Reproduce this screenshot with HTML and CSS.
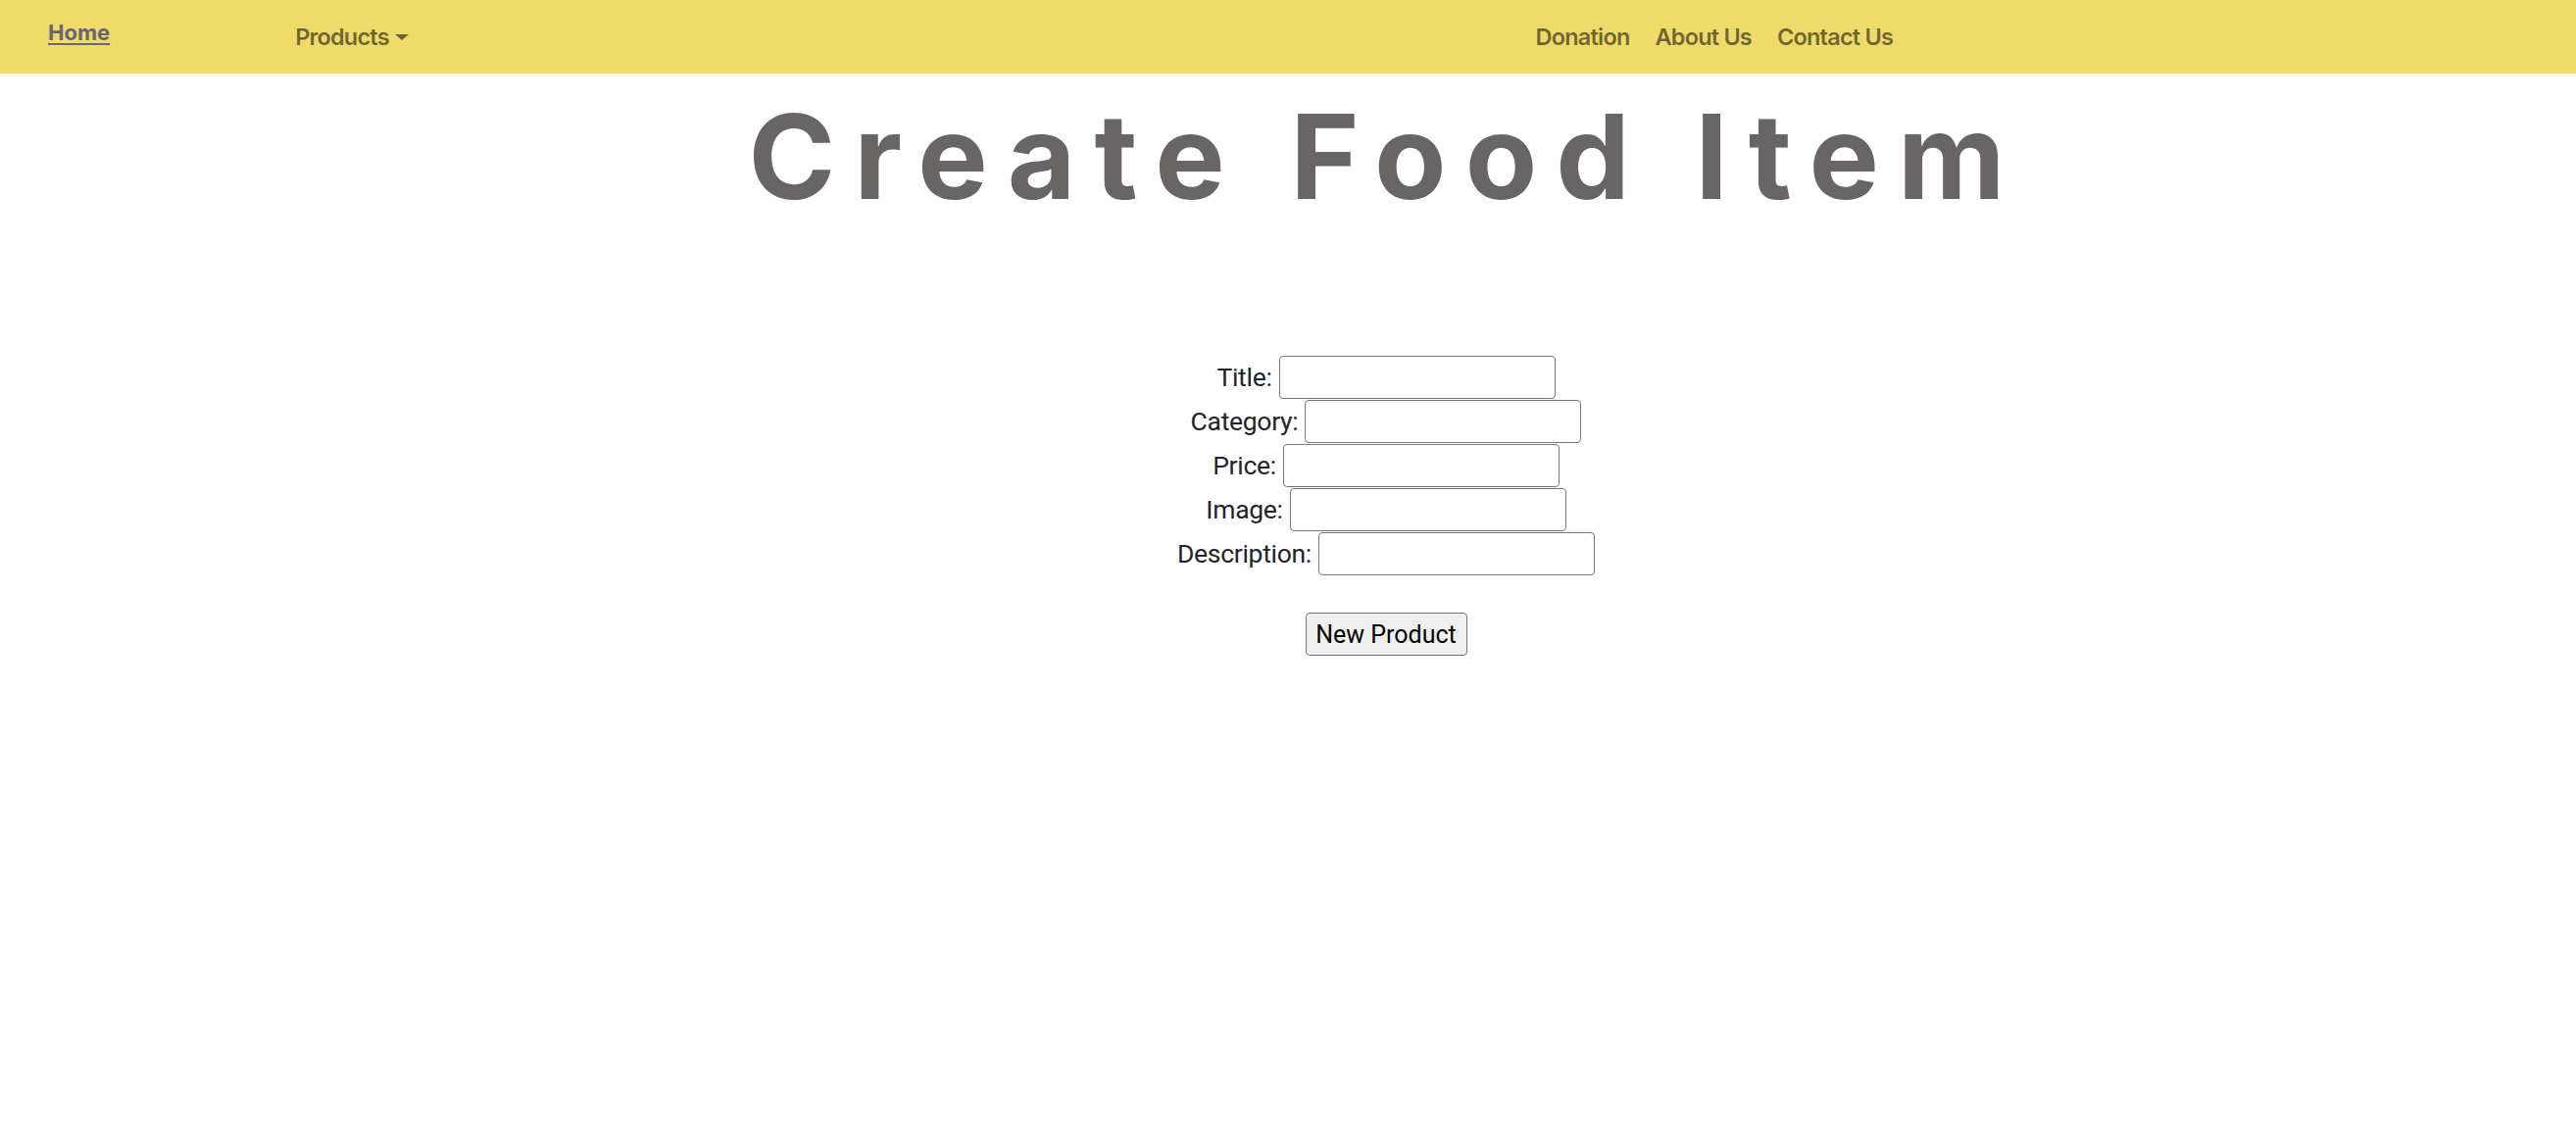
FILE: index.html
```html
<!DOCTYPE html>
<html lang="en">
<head>
<meta charset="utf-8">
<title>Create Food Item</title>
<link rel="stylesheet" href="styles.css">
</head>
<body>
<nav class="navbar">
  <a class="brand" href="#">Home</a>
  <a class="nav-link dropdown" href="#">Products</a>
  <ul class="nav-right">
    <li><a class="nav-link" href="#">Donation</a></li>
    <li><a class="nav-link" href="#">About Us</a></li>
    <li><a class="nav-link" href="#">Contact Us</a></li>
  </ul>
</nav>
<main class="main">
  <h1 class="title">Create Food Item</h1>
  <form class="form">
    <div class="row"><label for="t">Title:</label><input id="t" type="text"></div>
    <div class="row"><label for="c">Category:</label><input id="c" type="text"></div>
    <div class="row"><label for="p">Price:</label><input id="p" type="text"></div>
    <div class="row"><label for="i">Image:</label><input id="i" type="text"></div>
    <div class="row"><label for="d">Description:</label><input id="d" type="text"></div>
    <div class="actions"><button type="button" class="btn">New Product</button></div>
  </form>
</main>
</body>
</html>
```
FILE: styles.css
```css
* { box-sizing: border-box; }
html, body { margin: 0; padding: 0; }
body {
  font-family: Inter, "Noto Sans", sans-serif;
  color: #212529;
  background: #fff;
}
.navbar {
  display: flex;
  align-items: flex-start;
  height: 75px;
  background: #efdb6a;
  padding: 0 684px 0 49px;
}
.brand {
  font-size: 22px;
  line-height: 33px;
  font-weight: 700;
  color: #6a6570;
  text-decoration: underline;
  text-underline-offset: 3px;
  padding-top: 17px;
}
.nav-link {
  display: block;
  font-size: 23.5px;
  line-height: 35px;
  font-weight: 600;
  letter-spacing: -0.8px;
  color: rgba(0,0,0,.55);
  text-decoration: none;
  padding: 20px 13px 0;
}
.dropdown { margin-left: 176px; }
.dropdown::after {
  content: "";
  display: inline-block;
  vertical-align: 5px;
  margin-left: 6px;
  border-top: 6px solid;
  border-left: 7px solid transparent;
  border-right: 7px solid transparent;
}
.nav-right {
  display: flex;
  list-style: none;
  margin: 0 0 0 auto;
  padding: 0;
}
.main {
  padding-left: 200px;
  text-align: center;
}
.title {
  margin: 13px 0 0;
  font-size: 120px;
  line-height: 144px;
  font-weight: 700;
  letter-spacing: 19px;
  color: #696564;
}
.form {
  margin-top: 130px;
  font-family: Roboto, Inter, sans-serif;
  font-size: 26.5px;
}
.row {
  display: flex;
  justify-content: center;
  align-items: center;
  gap: 7px;
  height: 45px;
}
.row label {
  letter-spacing: -0.3px;
}
.row input {
  width: 282px;
  height: 44px;
  border: 1.5px solid #767676;
  border-radius: 4px;
  font: inherit;
  padding: 2px 4px;
  background: #fff;
}
.actions {
  margin-top: 38px;
}
.btn {
  width: 165px;
  height: 44px;
  font-family: Roboto, sans-serif;
  font-size: 25px;
  color: #000;
  background: #efefef;
  border: 1.5px solid #767676;
  border-radius: 4px;
  padding: 0;
}
```
